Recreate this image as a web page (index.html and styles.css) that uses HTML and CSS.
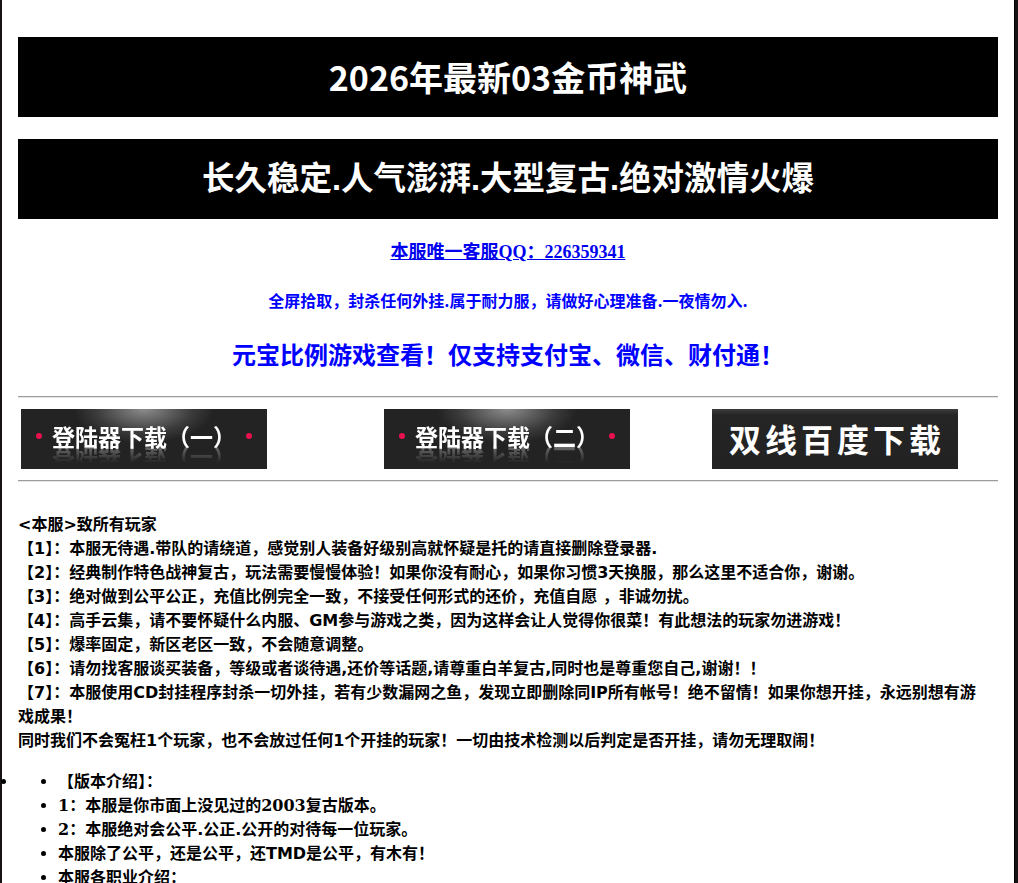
FILE: index.html
```html
<!DOCTYPE html>
<html>
<head>
  <meta charset="utf-8">
  <title>2026年最新03金币神武</title>
  <link rel="stylesheet" href="styles.css">
</head>

<body>
  <div class="page">
    <h1 class="banner">2026年最新03金币神武</h1>
    <h2 class="banner">长久稳定.人气澎湃.大型复古.绝对激情火爆</h2>

    <p class="qq"><a href="#">本服唯一客服QQ：226359341</a></p>
    <p class="notice">全屏拾取，封杀任何外挂.属于耐力服，请做好心理准备.一夜情勿入.</p>
    <p class="ratio">元宝比例游戏查看！仅支持支付宝、微信、财付通！</p>

    <hr>

    <div class="dl-row">
      <a class="dl dl-1" href="#">
        <span class="dot"></span><span class="dl-text">登陆器下载（一）</span><span class="dot"></span>
      </a>
      <a class="dl dl-2" href="#">
        <span class="dot"></span><span class="dl-text">登陆器下载（二）</span><span class="dot"></span>
      </a>
      <a class="dl dl-3" href="#">
        <span class="dl-big">双线百度下载</span>
      </a>
    </div>

    <hr>

    <p class="letter">
      &lt;本服&gt;致所有玩家<br>
      【1】：本服无待遇.带队的请绕道，感觉别人装备好级别高就怀疑是托的请直接删除登录器.<br>
      【2】：经典制作特色战神复古，玩法需要慢慢体验！如果你没有耐心，如果你习惯3天换服，那么这里不适合你，谢谢。<br>
      【3】：绝对做到公平公正，充值比例完全一致，不接受任何形式的还价，充值自愿 ，非诚勿扰。<br>
      【4】：高手云集，请不要怀疑什么内服、GM参与游戏之类，因为这样会让人觉得你很菜！有此想法的玩家勿进游戏！<br>
      【5】：爆率固定，新区老区一致，不会随意调整。<br>
      【6】：请勿找客服谈买装备，等级或者谈待遇,还价等话题,请尊重白羊复古,同时也是尊重您自己,谢谢！！<br>
      【7】：本服使用CD封挂程序封杀一切外挂，若有少数漏网之鱼，发现立即删除同IP所有帐号！绝不留情！如果你想开挂，永远别想有游戏成果！<br>
      同时我们不会冤枉1个玩家，也不会放过任何1个开挂的玩家！一切由技术检测以后判定是否开挂，请勿无理取闹！
    </p>

    <ul class="outer">
      <li>
        <ul class="inner">
          <li>【版本介绍】：</li>
          <li><span class="serif">1</span>：本服是你市面上没见过的<span class="serif">2003</span>复古版本。</li>
          <li><span class="serif">2</span>：本服绝对会公平.公正.公开的对待每一位玩家。</li>
          <li>本服除了公平，还是公平，还TMD是公平，有木有！</li>
          <li>本服各职业介绍：</li>
        </ul>
      </li>
    </ul>
  </div>
</body>
</html>
```

FILE: styles.css
```css
body {
  margin: 0;
  background: #161112;
  font-family: "DejaVu Sans", "Noto Sans CJK SC", sans-serif;
}

.page {
  width: 980px;
  margin-left: 2px;
  padding: 37px 16px 30px;
  background: #fff;
  border-right: 1px solid #000;
}

.banner {
  margin: 0;
  height: 80px;
  line-height: 80px;
  background: #000;
  color: #fff;
  text-align: center;
  font-family: "Noto Sans CJK SC", sans-serif;
  font-weight: 700;
  font-size: 34px;
}

h2.banner {
  margin-top: 22px;
  font-size: 32.5px;
  font-family: "Liberation Sans", "Noto Sans CJK SC", sans-serif;
}

.qq {
  margin: 21px 0 0;
  text-align: center;
  line-height: 24px;
  font-size: 18px;
  font-weight: 700;
  font-family: "Liberation Serif", "Noto Sans CJK SC", serif;
}

.qq a {
  color: #0000ee;
}

.notice {
  margin: 24px 0 0;
  text-align: center;
  color: #00f;
  font-size: 16px;
  line-height: 24px;
  font-weight: 700;
  font-family: "Noto Sans CJK SC", sans-serif;
}

.ratio {
  margin: 26px 0 0;
  text-align: center;
  color: #00f;
  font-size: 24px;
  line-height: 32px;
  font-weight: 700;
  font-family: "Noto Sans CJK SC", sans-serif;
}

hr {
  margin: 26px 0 0;
  height: 0;
  border: 0;
  border-top: 1px solid #9c9c9c;
  border-bottom: 1px solid #e6e6e6;
}

.dl-row + hr {
  margin-top: 11px;
}

/* download buttons */
.dl-row {
  display: flex;
  margin-top: 11px;
  padding-left: 3px;
}

.dl {
  width: 246px;
  height: 60px;
  display: flex;
  align-items: flex-start;
  justify-content: space-between;
  box-sizing: border-box;
  padding: 15px 15px 0;
  text-decoration: none;
  color: #fff;
  background: radial-gradient(ellipse 70px 34px at 50% 0, #8c8c8c, #3a3a3a 70%, rgba(35,35,35,0) 100%), #232323;
  font-family: "Noto Sans CJK SC", sans-serif;
  font-weight: 700;
}

.dl-2 {
  margin-left: 117px;
}

.dl-3 {
  margin-left: 82px;
  justify-content: center;
  padding: 12px 0 0;
  background: linear-gradient(#3c3c3c, #252525 6px, #222 100%);
}

.dot {
  width: 6px;
  height: 6px;
  margin-top: 9px;
  border-radius: 50%;
  background: #e8104f;
}

.dl-text {
  font-size: 23px;
  line-height: 24px;
  -webkit-box-reflect: below -2px linear-gradient(transparent 30%, rgba(255,255,255,0.35));
}

.dl-big {
  font-size: 32px;
  line-height: 34px;
  letter-spacing: 4px;
  margin-right: -4px;
}

/* notice letter */
.letter {
  margin: 31px 8px 0 0;
  font-size: 16px;
  line-height: 24px;
  font-weight: 700;
  color: #000;
}

.serif {
  font-family: "DejaVu Serif", "Noto Sans CJK SC", serif;
}

.outer {
  margin: 17px 0 0;
  padding-left: 0;
  font-size: 16px;
  line-height: 24px;
  font-weight: 700;
}

.inner {
  margin: 0;
  padding-left: 40px;
  list-style: disc;
}
```
